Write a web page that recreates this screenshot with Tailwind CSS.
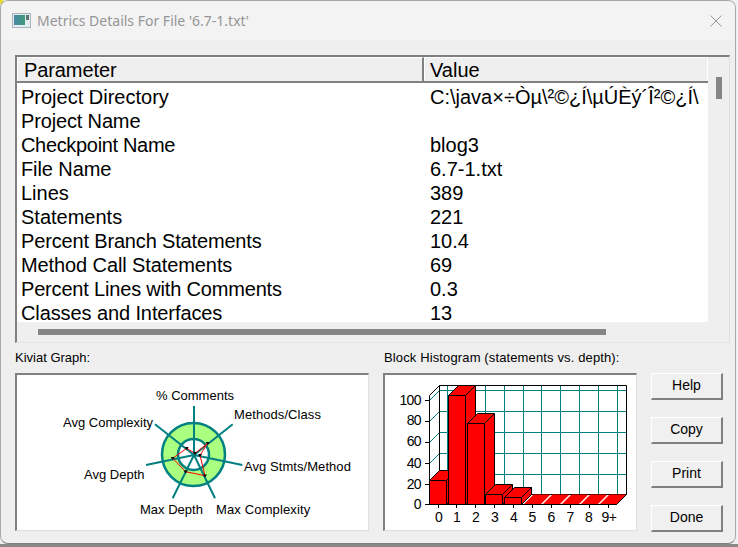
<!DOCTYPE html>
<html lang="en">
<head>
<meta charset="UTF-8">
<title>Metrics Details</title>
<script src="https://cdn.jsdelivr.net/npm/@tailwindcss/browser@4"></script>
</head>
<body class="relative w-[738px] h-[547px] overflow-hidden bg-[#f0f0f0] font-['Liberation_Sans',Arial,sans-serif] text-black">
<div class="absolute top-0 left-0 w-[3px] h-[4px] bg-[#e6e020]"></div>
<div class="relative w-[736px] h-[544px] bg-[#efefef] border border-[#a8a8a8] border-b-[#808080] rounded-lg overflow-hidden flex flex-col">

  <!-- title bar -->
  <div class="h-[39px] bg-[#f3f3f3] flex items-center pl-[11px] pr-[13px] shrink-0">
    <svg width="19" height="15" viewBox="0 0 19 15" class="mr-[6px]">
      <defs>
        <linearGradient id="ico" x1="0" y1="0" x2="1" y2="0">
          <stop offset="0" stop-color="#4a86a8"/>
          <stop offset="1" stop-color="#3f9a78"/>
        </linearGradient>
      </defs>
      <rect x="0.5" y="0.5" width="18" height="14" fill="#e6edf0" stroke="#a8b4ba"/>
      <rect x="2" y="2" width="11" height="10" fill="url(#ico)"/>
      <rect x="14" y="2" width="3" height="5" fill="#5a7474"/>
    </svg>
    <span class="text-[14px] font-['Noto_Sans',sans-serif] text-[#969696]">Metrics Details For File '6.7-1.txt'</span>
    <svg width="12" height="12" viewBox="0 0 12 12" class="ml-auto" fill="none" stroke="#969696" stroke-width="1">
      <path d="M0.5 0.5 11.500 11.500M11.500 0.5 0.5 11.500"/>
    </svg>
  </div>

  <!-- table -->
  <div class="mt-[15px] ml-[14px] w-[715px] h-[288px] border-t-2 border-l-2 border-[#808080] border-r border-r-[#e0e0e0] border-b border-b-[#e4e4e4] flex flex-col shrink-0">
    <div class="flex-1 min-h-0 flex">
      <div class="w-[691px] flex flex-col">
        <div class="h-[26px] flex shrink-0 border-b-2 border-[#808080] text-[20px] leading-[24px]">
          <div class="w-[407px] border-t border-l border-white border-r-2 border-r-[#808080] pl-[6px] tracking-[-0.1px]">Parameter</div>
          <div class="flex-1 border-t border-l border-r border-white pl-[5px]">Value</div>
        </div>
        <div class="flex-1 bg-white pt-[2px] text-[20px] leading-[24px]">
          <div class="flex h-[24px]"><div class="w-[413px] pl-[4px]">Project Directory</div><div class="whitespace-nowrap">C:\java×÷Òµ\²©¿Í\µÚÈý´Î²©¿Í\</div></div>
          <div class="flex h-[24px]"><div class="w-[413px] pl-[4px] tracking-[-0.15px]">Project Name</div><div></div></div>
          <div class="flex h-[24px]"><div class="w-[413px] pl-[4px] tracking-[-0.33px]">Checkpoint Name</div><div>blog3</div></div>
          <div class="flex h-[24px]"><div class="w-[413px] pl-[4px] tracking-[-0.1px]">File Name</div><div>6.7-1.txt</div></div>
          <div class="flex h-[24px]"><div class="w-[413px] pl-[4px]">Lines</div><div>389</div></div>
          <div class="flex h-[24px]"><div class="w-[413px] pl-[4px]">Statements</div><div>221</div></div>
          <div class="flex h-[24px]"><div class="w-[413px] pl-[4px] tracking-[-0.16px]">Percent Branch Statements</div><div>10.4</div></div>
          <div class="flex h-[24px]"><div class="w-[413px] pl-[4px] tracking-[-0.1px]">Method Call Statements</div><div>69</div></div>
          <div class="flex h-[24px]"><div class="w-[413px] pl-[4px] tracking-[-0.18px]">Percent Lines with Comments</div><div>0.3</div></div>
          <div class="flex h-[18px] mt-[3px] leading-[18px]"><div class="w-[413px] pl-[4px] tracking-[-0.1px]">Classes and Interfaces</div><div>13</div></div>
        </div>
      </div>
      <!-- vertical scrollbar -->
      <div class="w-[21px] pt-[20px] pl-[8px]">
        <div class="w-[6px] h-[22px] bg-[#858585]"></div>
      </div>
    </div>
    <!-- horizontal scrollbar -->
    <div class="h-[20px] shrink-0 pt-[7px] pl-[21px]">
      <div class="w-[568px] h-[6px] bg-[#858585]"></div>
    </div>
  </div>

  <!-- lower part -->
  <div class="flex mt-[6px] ml-[14px]">
    <div class="w-[354px] mr-[14px]">
      <div class="text-[13px] leading-[15px] h-[24px] pt-[1px]">Kiviat Graph:</div>
      <div class="w-[354px] h-[158px] bg-white border-t-2 border-l-2 border-[#808080] border-r border-r-[#e0e0e0] border-b border-b-[#e0e0e0]">
        <svg width="351" height="155" viewBox="17 375 351 155" class="block">
          <circle cx="193.5" cy="454.5" r="24" fill="none" stroke="#aaff80" stroke-width="16"/>
          <circle cx="193.5" cy="454.5" r="31.500" fill="none" stroke="#008080" stroke-width="2.500"/>
          <circle cx="193.5" cy="454.5" r="15.500" fill="none" stroke="#008080" stroke-width="2.500"/>
          <path d="M194 455V406M194 455 232.7 424.3M194 455 242.3 465M194 455 215 498.3M194 455 172.7 498.3M194 455 146 465M194 455 155 424.3" stroke="#008080" stroke-width="2" fill="none"/>
          <polygon points="195,453.3 207.7,443.3 200,455.3 205,475.7 185.7,471.7 172.7,458.3 186.7,448.3" fill="none" stroke="#ff0000" stroke-width="1"/>
          <path d="M193 452h4l-2 3zM205.700 442h4l-2 3zM198 454h4l-2 3zM203 474.500h4l-2 3zM183.700 470.500h4l-2 3zM170.700 457h4l-2 3zM184.700 447h4l-2 3z" fill="#000"/>
          <g font-size="13" fill="#000">
            <text x="156" y="400">% Comments</text>
            <text x="234" y="419" letter-spacing="0.08">Methods/Class</text>
            <text x="63" y="427">Avg Complexity</text>
            <text x="244" y="471" letter-spacing="0.06">Avg Stmts/Method</text>
            <text x="84" y="479">Avg Depth</text>
            <text x="140" y="514">Max Depth</text>
            <text x="216" y="514" letter-spacing="0.14">Max Complexity</text>
          </g>
        </svg>
      </div>
    </div>
    <div class="w-[254px] mr-[14px]">
      <div class="text-[13px] leading-[15px] h-[24px] pt-[1px] pl-[1px] whitespace-nowrap tracking-[0.13px]">Block Histogram (statements vs. depth):</div>
      <div class="w-[254px] h-[158px] bg-white border-t-2 border-l-2 border-[#808080] border-r border-r-[#e0e0e0] border-b border-b-[#e0e0e0]">
        <svg width="251" height="155" viewBox="385 375 251 155" class="block">
          <!-- back wall grid -->
          <path d="M439.500 390.500H626.500M439.500 411.500H626.500M439.500 432.500H626.500M439.500 453.500H626.500M439.500 474.500H626.500" stroke="#008080" fill="none"/>
          <path d="M447.500 385V494M466.500 385V494M485.500 385V494M504.500 385V494M523.500 385V494M541.500 385V494M560.500 385V494M579.500 385V494M598.500 385V494M617.500 385V494" stroke="#008080" fill="none"/>
          <!-- side wall ticks -->
          <path d="M429.500 400.500 439.500 390.500M429.500 421.500 439.500 411.500M429.500 442.500 439.500 432.500M429.500 463.500 439.500 453.500M429.500 484.500 439.500 474.500" stroke="#008080" fill="none"/>
          <!-- frame -->
          <path d="M429.500 504.500V395.500L439.500 385.500H626.500V494.500L616.500 504.500H429.500M439.500 385.500V494.500M429.500 504.500 439.500 494.500H626.500" stroke="#000" fill="none"/>
          <!-- bars -->
          <g fill="#ff0000" stroke="#000" stroke-width="1">
            <path d="M429.500 480.500H446.500V504.500H429.500ZM429.500 480.500 439.500 470.500H456.500V494.500L446.500 504.500M446.500 480.500 456.500 470.500"/>
            <path d="M448.500 395.500H465.500V504.500H448.500ZM448.500 395.500 458.500 385.500H475.500V494.500L465.500 504.500M465.500 395.500 475.500 385.500"/>
            <path d="M467.500 423.500H484.500V504.500H467.500ZM467.500 423.500 477.500 413.500H494.500V494.500L484.500 504.500M484.500 423.500 494.500 413.500"/>
            <path d="M485.500 494.500H502.500V504.500H485.500ZM485.500 494.500 495.500 484.500H512.500V494.500L502.500 504.500M502.500 494.500 512.500 484.500"/>
            <path d="M504.500 497.500H521.500V504.500H504.500ZM504.500 497.500 514.500 487.500H531.500V494.500L521.500 504.500M521.500 497.500 531.500 487.500"/>
          </g>
          <g fill="#ff0000">
            <path d="M523.500 504.500 533.500 494.500H550.500L540.500 504.500Z"/>
            <path d="M542.500 504.500 552.500 494.500H569.500L559.500 504.500Z"/>
            <path d="M561.500 504.500 571.500 494.500H588.500L578.500 504.500Z"/>
            <path d="M580.500 504.500 590.500 494.500H607.500L597.500 504.500Z"/>
            <path d="M599.500 504.500 609.500 494.500H626.500L616.500 504.500Z"/>
          </g>
          <path d="M429.500 504.500H616.500L626.500 494.500" stroke="#000" fill="none"/>
          <!-- ticks -->
          <path d="M438.500 504V508M456.500 504V508M475.500 504V508M494.500 504V508M513.500 504V508M532.500 504V508M551.500 504V508M570.500 504V508M589.500 504V508M608.500 504V508M425 400.500H429M425 421.500H429M425 442.500H429M425 463.500H429M425 484.500H429M425 504.500H429" stroke="#000" fill="none"/>
          <g font-size="14" fill="#000" letter-spacing="-0.6">
            <g text-anchor="end">
              <text x="421" y="405">100</text>
              <text x="421" y="425">80</text>
              <text x="421" y="446">60</text>
              <text x="421" y="468">40</text>
              <text x="421" y="489">20</text>
              <text x="421" y="509">0</text>
            </g>
            <g text-anchor="middle">
              <text x="438.500" y="522">0</text>
              <text x="456.500" y="522">1</text>
              <text x="475.500" y="522">2</text>
              <text x="494.500" y="522">3</text>
              <text x="513.500" y="522">4</text>
              <text x="532" y="522">5</text>
              <text x="551" y="522">6</text>
              <text x="570" y="522">7</text>
              <text x="588.500" y="522">8</text>
              <text x="609" y="522">9+</text>
            </g>
          </g>
        </svg>
      </div>
    </div>
    <!-- buttons -->
    <div class="w-[72px] pt-[24px] flex flex-col gap-[17px]">
      <button class="h-[27px] pb-[1px] bg-[#f0f0f0] border-t border-l border-white border-r-2 border-b-2 border-r-[#808080] border-b-[#808080] text-[14px]">Help</button>
      <button class="h-[27px] pb-[1px] bg-[#f0f0f0] border-t border-l border-white border-r-2 border-b-2 border-r-[#808080] border-b-[#808080] text-[14px]">Copy</button>
      <button class="h-[27px] pb-[1px] bg-[#f0f0f0] border-t border-l border-white border-r-2 border-b-2 border-r-[#808080] border-b-[#808080] text-[14px]">Print</button>
      <button class="h-[27px] pb-[1px] bg-[#f0f0f0] border-t border-l border-white border-r-2 border-b-2 border-r-[#808080] border-b-[#808080] text-[14px]">Done</button>
    </div>
  </div>
</div>
<div class="h-[3px] bg-[#8a8a8a]"></div>
</body>
</html>
